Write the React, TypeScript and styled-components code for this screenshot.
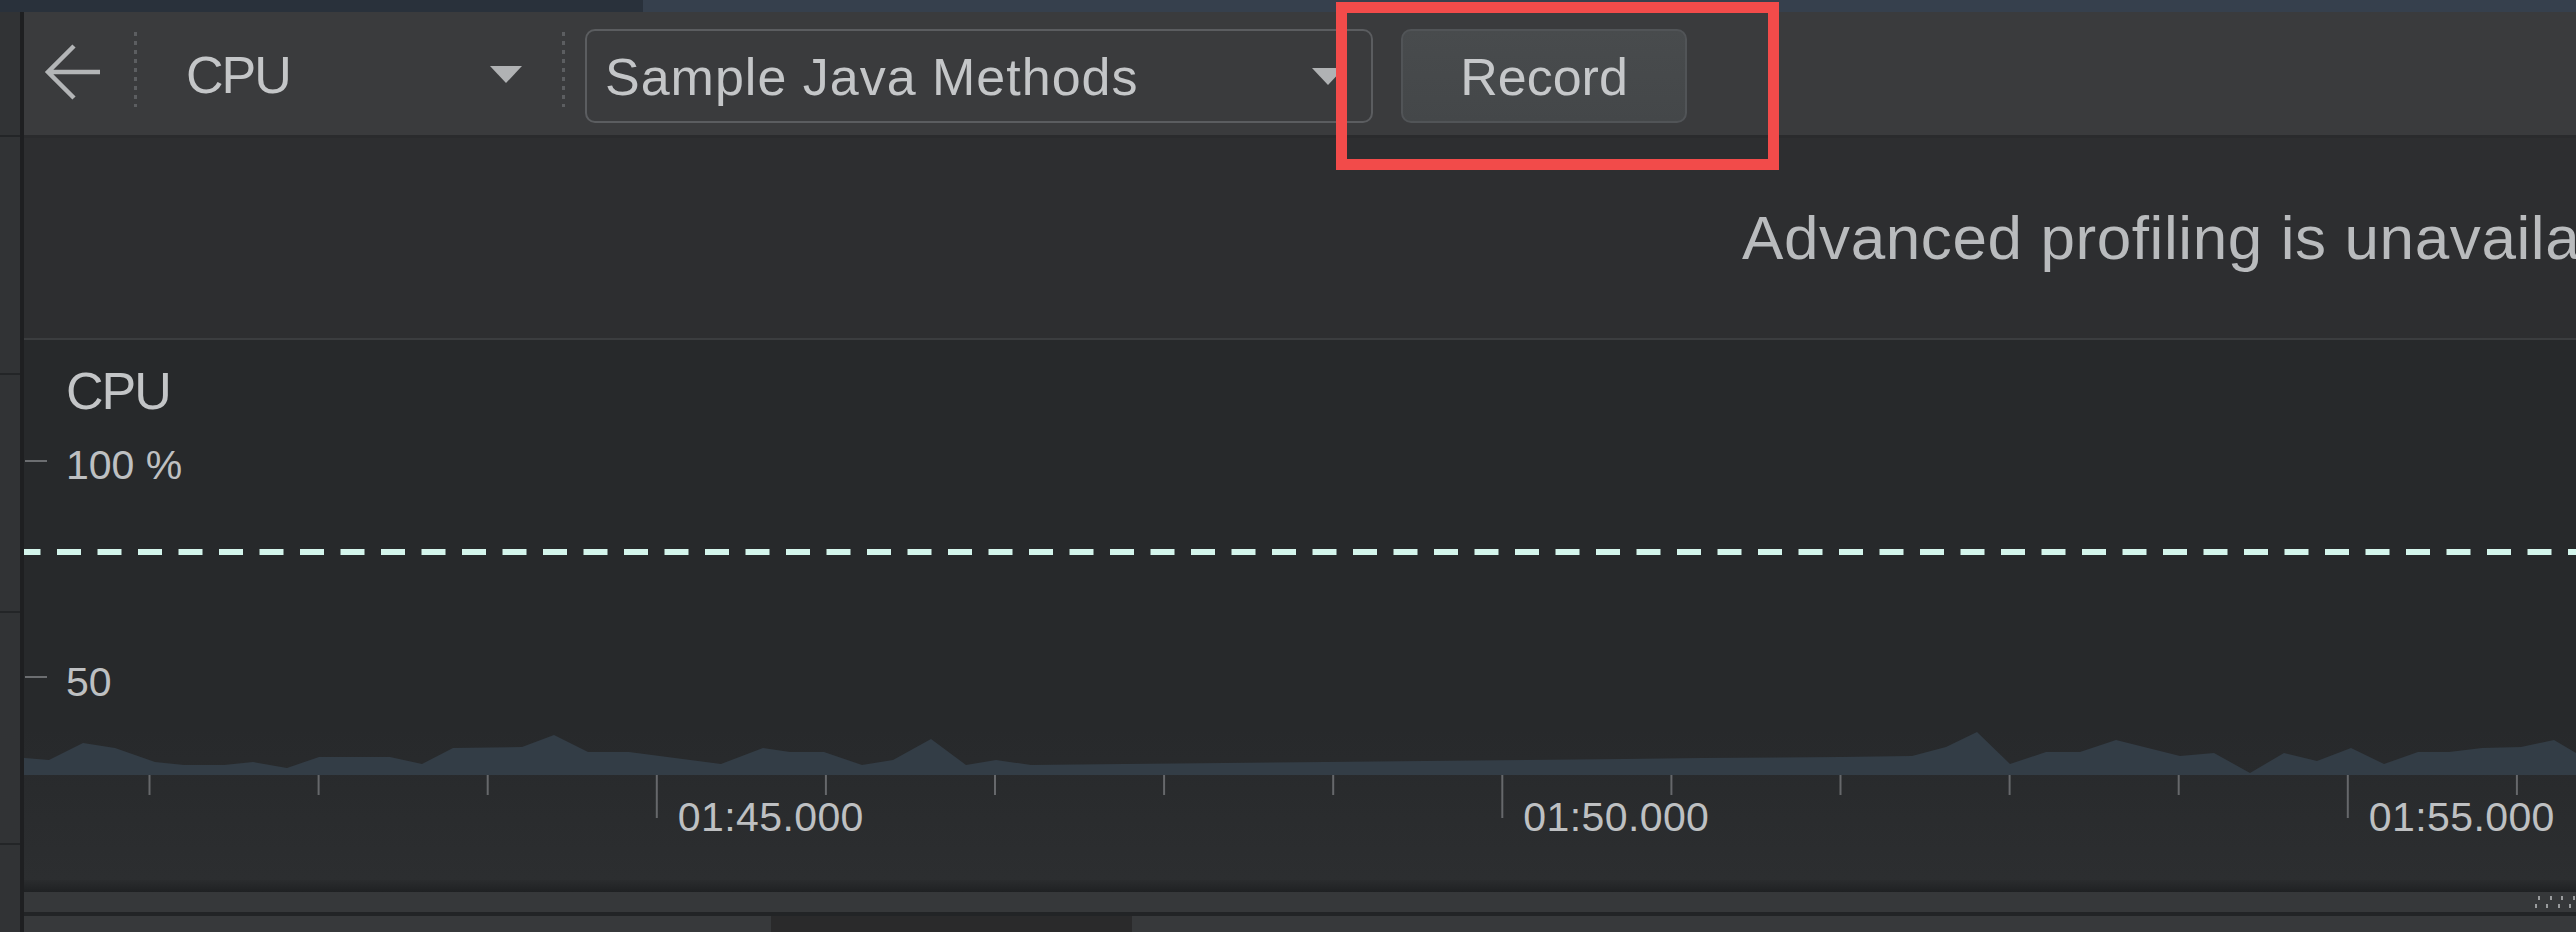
import React from 'react';
import styled, { createGlobalStyle } from 'styled-components';

const FONT = `"Liberation Sans", Arial, Helvetica, sans-serif`;

const GlobalStyle = createGlobalStyle`
  *, *::before, *::after { box-sizing: border-box; }
  html, body { margin: 0; padding: 0; background: #27292c; overflow: hidden; }
  body { font-family: ${FONT}; -webkit-font-smoothing: antialiased; }
  #root { width: 2576px; height: 932px; }
`;

const Screen = styled.div`
  position: relative;
  width: 2576px;
  height: 932px;
  display: flex;
  flex-direction: column;
  overflow: hidden;
  background: #27292c;
`;

const TopStrip = styled.div`
  flex: none;
  height: 12px;
  display: flex;
`;

const StripTab = styled.div<{ $active?: boolean }>`
  height: 100%;
  ${({ $active }) =>
    $active
      ? 'flex: 1; background: #36404d;'
      : 'flex: none; width: 643px; background: #29313b;'}
`;

const Body = styled.div`
  flex: 1;
  display: flex;
  min-height: 0;
`;

const Rail = styled.div`
  flex: none;
  width: 24px;
  background: #313335;
  border-right: 4px solid #1e1f21;
  display: flex;
  flex-direction: column;
`;

const RailCell = styled.div<{ $h: number }>`
  flex: none;
  height: ${(p) => p.$h}px;
  border-bottom: 2px solid #232527;
`;

const Main = styled.div`
  flex: 1;
  min-width: 0;
  display: flex;
  flex-direction: column;
`;

const Toolbar = styled.div`
  flex: none;
  height: 126px;
  padding-top: 5px;
  background: #3a3b3d;
  border-bottom: 3px solid #2a2b2d;
  display: flex;
  align-items: center;
`;

const BackButton = styled.button`
  flex: none;
  width: 57px;
  height: 56px;
  margin: 0 0 8px 20px;
  padding: 0;
  border: 0;
  background: none;
  color: #b3b5b7;
  display: flex;
  cursor: pointer;
`;

const DottedDivider = styled.div<{ $ml: number }>`
  flex: none;
  width: 3px;
  height: 75px;
  margin-left: ${(p) => p.$ml}px;
  margin-bottom: 13px;
  background: repeating-linear-gradient(to bottom, #5c5e61 0 4px, transparent 4px 9px);
`;

const ModeSelect = styled.div`
  flex: none;
  width: 336px;
  margin-left: 49px;
  margin-bottom: 3px;
  display: flex;
  align-items: center;
  justify-content: space-between;
`;

const ToolbarText = styled.span<{ $ls?: number }>`
  font-size: 52px;
  line-height: 1;
  letter-spacing: ${(p) => p.$ls ?? 0}px;
  color: #c4c6c8;
  white-space: nowrap;
`;

const Combo = styled.div`
  flex: none;
  width: 788px;
  height: 94px;
  margin-left: 20px;
  padding: 2px 27px 0 18px;
  border: 2px solid #5b5d60;
  border-radius: 10px;
  background: #3a3b3d;
  display: flex;
  align-items: center;
  justify-content: space-between;
`;

const RecordButton = styled.button`
  flex: none;
  width: 286px;
  height: 94px;
  margin-left: 28px;
  padding: 2px 0 0;
  border: 2px solid #515457;
  border-radius: 10px;
  background: linear-gradient(#484b4d, #444749);
  color: #c6c8ca;
  font-family: ${FONT};
  font-size: 52px;
  line-height: 1;
  cursor: pointer;
`;

const Banner = styled.div`
  flex: none;
  height: 202px;
  padding-left: 1718px;
  background: #2d2e30;
  border-bottom: 2px solid #3b3d3f;
  display: flex;
  align-items: center;
  overflow: hidden;
`;

const BannerText = styled.span`
  flex: none;
  font-size: 62px;
  line-height: 1;
  letter-spacing: 0.6px;
  color: #b9bbbd;
  white-space: nowrap;
`;

const Chart = styled.div`
  position: relative;
  flex: none;
  height: 540px;
  padding: 25px 0 0 42px;
  background: linear-gradient(#27292b 0%, #27292b 72%, #2c2e30 100%);
  overflow: hidden;
`;

const ChartCanvas = styled.svg`
  position: absolute;
  left: 0;
  top: 0;
`;

const ChartTitle = styled.div`
  position: relative;
  font-size: 52px;
  line-height: 1;
  letter-spacing: -2px;
  color: #c3c5c7;
`;

const AxisLabel = styled.span<{ $x: number; $y: number; $ls?: number }>`
  position: absolute;
  left: ${(p) => p.$x}px;
  top: ${(p) => p.$y}px;
  font-size: 41px;
  line-height: 1;
  letter-spacing: ${(p) => p.$ls ?? 0}px;
  color: #bec0c2;
  white-space: nowrap;
`;

const ScrollShadow = styled.div`
  flex: none;
  height: 12px;
  background: linear-gradient(#2a2c2e, #1f2123);
`;

const ScrollTrack = styled.div`
  flex: none;
  height: 20px;
  background: #36383a;
  display: flex;
  justify-content: flex-end;
`;

const Separator = styled.div`
  flex: none;
  height: 4px;
  background: #222426;
`;

const BottomBar = styled.div`
  flex: none;
  height: 16px;
  background: #37393b;
  display: flex;
`;

const BottomThumb = styled.div`
  flex: none;
  width: 361px;
  margin-left: 747px;
  background: #2a2a2b;
`;

const Highlight = styled.div`
  position: absolute;
  left: 1336px;
  top: 2px;
  width: 443px;
  height: 168px;
  border: 11px solid #f24b4a;
  pointer-events: none;
`;

const Caret = () => (
  <svg width="32" height="18" viewBox="0 0 32 18">
    <polygon points="0,0 32,0 16,17" fill="#b0b2b4" />
  </svg>
);

const BackArrow = () => (
  <svg width="57" height="56" viewBox="0 0 57 56" fill="none">
    <path d="M56 28 H4 M30 2 L4 28 L30 54" stroke="currentColor" strokeWidth="4.5" />
  </svg>
);

const Grip = () => (
  <svg width="44" height="20" viewBox="0 0 44 20">
    {[6, 18, 29, 41].map((x) => (
      <rect key={`a${x}`} x={x} y={4} width={2} height={4} fill="#9a9c9e" />
    ))}
    {[3, 14, 26, 37].map((x) => (
      <rect key={`b${x}`} x={x} y={12} width={2} height={4} fill="#9a9c9e" />
    ))}
  </svg>
);

const CHART_W = 2552;
const CHART_H = 540;
const BASE = 435;

const AREA: [number, number][] = [
  [0, 418], [1, 418], [25, 420], [59, 403], [91, 408], [131, 422], [160, 425],
  [200, 425], [229, 422], [263, 428], [295, 417], [366, 417], [398, 424],
  [429, 408], [498, 407], [530, 395], [564, 412], [605, 412], [697, 424],
  [739, 408], [766, 412], [800, 412], [838, 425], [869, 420], [907, 399],
  [942, 425], [972, 420], [1007, 425], [1100, 424], [1200, 423], [1301, 422],
  [1400, 421], [1500, 420], [1600, 419], [1676, 418], [1816, 417], [1888, 416],
  [1922, 407], [1953, 392], [1986, 424], [2022, 412], [2056, 412], [2092, 400],
  [2156, 416], [2190, 413], [2226, 433], [2260, 413], [2293, 421], [2327, 408],
  [2360, 424], [2394, 412], [2425, 412], [2458, 408], [2497, 407], [2530, 400],
  [2552, 413],
];

const areaPath =
  `M0 ${BASE} ` + AREA.map(([x, y]) => `L${x} ${y}`).join(' ') + ` L${CHART_W} ${BASE} Z`;

const TICK0 = 125.5;
const TICK_STEP = 169.1;
const ticks = Array.from({ length: 15 }, (_, k) => ({
  x: TICK0 + TICK_STEP * k,
  major: k % 5 === 3,
}));

const timeLabels = ['01:45.000', '01:50.000', '01:55.000'].map((text, i) => ({
  text,
  x: TICK0 + TICK_STEP * (3 + 5 * i) + 21,
}));

export default function App() {
  return (
    <>
      <GlobalStyle />
      <Screen>
        <TopStrip>
          <StripTab />
          <StripTab $active />
        </TopStrip>
        <Body>
          <Rail>
            <RailCell $h={125} />
            <RailCell $h={238} />
            <RailCell $h={238} />
            <RailCell $h={232} />
          </Rail>
          <Main>
            <Toolbar>
              <BackButton aria-label="Back">
                <BackArrow />
              </BackButton>
              <DottedDivider $ml={33} />
              <ModeSelect>
                <ToolbarText $ls={-2}>CPU</ToolbarText>
                <Caret />
              </ModeSelect>
              <DottedDivider $ml={40} />
              <Combo>
                <ToolbarText $ls={1}>Sample Java Methods</ToolbarText>
                <Caret />
              </Combo>
              <RecordButton>Record</RecordButton>
            </Toolbar>
            <Banner>
              <BannerText>Advanced profiling is unavailable for the selected process</BannerText>
            </Banner>
            <Chart>
              <ChartCanvas width={CHART_W} height={CHART_H} viewBox={`0 0 ${CHART_W} ${CHART_H}`}>
                <path d={areaPath} fill="#333d46" />
                <line x1={0} y1={212} x2={CHART_W} y2={212} stroke="#d4f5ec" strokeWidth={6} strokeDasharray="24 16.5" strokeDashoffset={7.5} />
                <line x1={1} y1={121} x2={23} y2={121} stroke="#6c6e71" strokeWidth={2} />
                <line x1={1} y1={337} x2={23} y2={337} stroke="#6c6e71" strokeWidth={2} />
                {ticks.map((t) => (
                  <line
                    key={t.x}
                    x1={t.x}
                    x2={t.x}
                    y1={BASE}
                    y2={t.major ? 478 : 455}
                    stroke="#66686b"
                    strokeWidth={2}
                  />
                ))}
              </ChartCanvas>
              <ChartTitle>CPU</ChartTitle>
              <AxisLabel $x={42} $y={105}>100 %</AxisLabel>
              <AxisLabel $x={42} $y={322}>50</AxisLabel>
              {timeLabels.map((l) => (
                <AxisLabel key={l.text} $x={l.x} $y={457} $ls={0.4}>
                  {l.text}
                </AxisLabel>
              ))}
            </Chart>
            <ScrollShadow />
            <ScrollTrack>
              <Grip />
            </ScrollTrack>
            <Separator />
            <BottomBar>
              <BottomThumb />
            </BottomBar>
          </Main>
        </Body>
        <Highlight />
      </Screen>
    </>
  );
}
